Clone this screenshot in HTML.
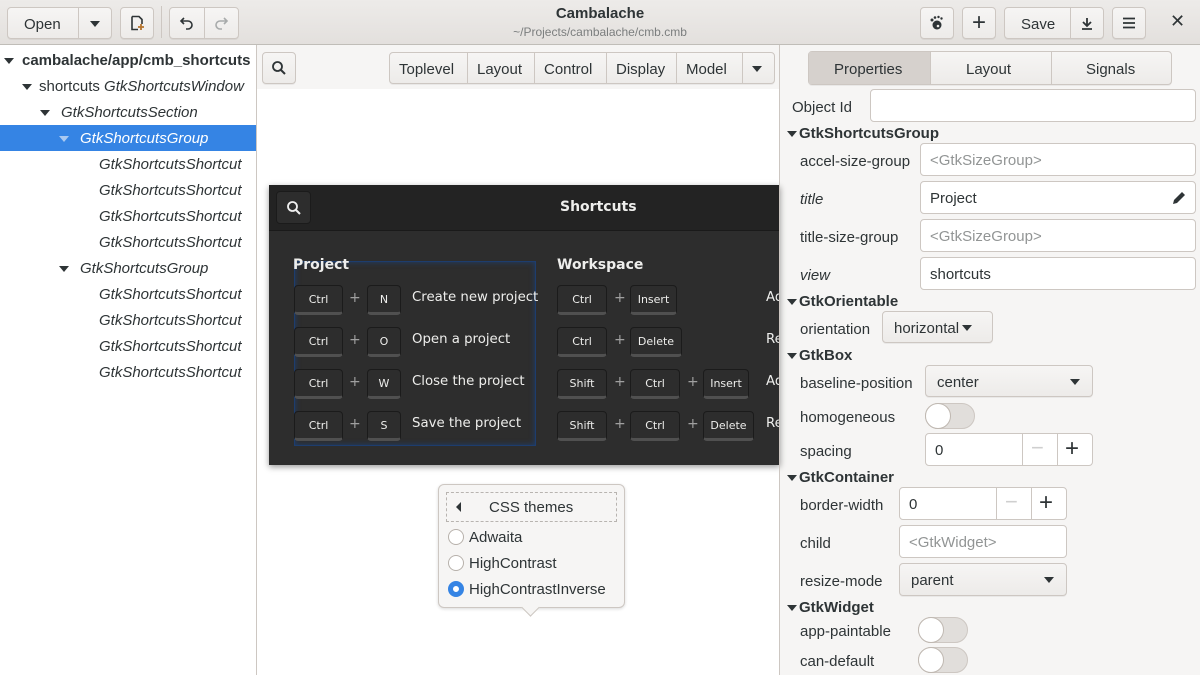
<!DOCTYPE html>
<html><head><meta charset="utf-8"><style>
*{box-sizing:border-box;margin:0;padding:0}
body{width:1200px;height:675px;overflow:hidden;background:#f6f5f4;font-family:"Liberation Sans","DejaVu Sans",sans-serif;font-size:15px;color:#2e3436;position:relative}
.a{position:absolute}
.btn{position:absolute;height:32px;border:1px solid #cdc7c2;border-radius:4px;background:linear-gradient(#f6f5f4,#edebe9);display:flex;align-items:center;justify-content:center;color:#2e3436;box-shadow:0 1px rgba(0,0,0,.05)}
.sep{position:absolute;top:0;bottom:0;width:1px;background:#cdc7c2}
.entry{position:absolute;height:33px;border:1px solid #cdc7c2;border-radius:4px;background:#fff;display:flex;align-items:center;padding-left:9px;padding-top:2px}
.ph{color:#929595}
.lbl{position:absolute;left:800px;margin-top:2px}
.hd{position:absolute;left:787px;font-weight:bold;margin-top:1px}
.tri{display:inline-block;width:0;height:0;border-left:5px solid transparent;border-right:5px solid transparent;border-top:6px solid #2e3436;vertical-align:middle}
.sw{position:absolute;width:50px;height:26px;border:1px solid #cdc7c2;border-radius:13px;background:#e1dedb}
.sw:after{content:"";position:absolute;left:-1px;top:-1px;width:26px;height:26px;border-radius:50%;background:#fff;border:1px solid #bfb8b1;box-sizing:border-box}
.tree{position:absolute;left:0;height:26px;width:256px;line-height:28px;white-space:nowrap;overflow:hidden}
.tree i{font-style:italic}
.dlg{position:absolute;left:269px;top:185px;width:511px;height:280px;background:#2d2d2d;color:#eeeeec;font-family:"DejaVu Sans",sans-serif;overflow:hidden;box-shadow:0 2px 6px rgba(0,0,0,.4)}
.key{position:absolute;height:30px;border:1px solid #1b1b1b;border-bottom:3px solid #505050;border-radius:4px;background:#2d2d2d;font-size:11px;display:flex;align-items:center;justify-content:center;color:#eeeeec;padding-top:1px}
.plus{position:absolute;font-size:14px;color:#a0a0a0}
.desc{position:absolute;font-size:13.3px;color:#eeeeec}
</style></head><body>
<!-- header -->
<div class="a" style="left:0;top:0;width:1200px;height:45px;background:linear-gradient(#edebe9,#e3e0dd);border-bottom:1px solid #c0bdb8"></div>
<div class="btn" style="left:7px;top:7px;width:105px;justify-content:flex-start"><span style="margin-left:16px;margin-top:2px">Open</span><div class="sep" style="left:70px"></div><span class="tri" style="position:absolute;left:82px;top:13px"></span></div>
<div class="btn" style="left:120px;top:7px;width:34px"><svg width="16" height="16" viewBox="0 0 16 16"><path d="M3 1.5h7l3 3V9M3 1.5v13h6" fill="none" stroke="#2e3436" stroke-width="1.6"/><path d="M12 9v6M9 12h6" stroke="#b5742f" stroke-width="1.8"/></svg></div>
<div class="a" style="left:161px;top:6px;width:1px;height:32px;background:#cdc7c2"></div>
<div class="btn" style="left:169px;top:7px;width:70px"><div class="sep" style="left:34px"></div>
<svg class="a" style="left:9px;top:7px" width="16" height="16" viewBox="0 0 16 16"><path d="M5 3L2 6l3 3M2 6h7a4 4 0 0 1 0 8H7" fill="none" stroke="#2e3436" stroke-width="1.6"/></svg>
<svg class="a" style="left:43px;top:7px" width="16" height="16" viewBox="0 0 16 16"><path d="M11 3l3 3-3 3M14 6H7a4 4 0 0 0 0 8h2" fill="none" stroke="#a8abab" stroke-width="1.6"/></svg></div>
<div class="a" style="left:0;width:1200px;top:5px;text-align:center;font-weight:bold;font-size:15px">Cambalache</div>
<div class="a" style="left:0;width:1200px;top:25px;text-align:center;font-size:12px;color:#7b7e7e">~/Projects/cambalache/cmb.cmb</div>
<div class="btn" style="left:920px;top:7px;width:34px"><svg width="16" height="16" viewBox="0 0 16 16"><circle cx="8" cy="10" r="4.5" fill="#2e3436"/><circle cx="3" cy="5" r="1.5" fill="#2e3436"/><circle cx="6" cy="2.5" r="1.3" fill="#2e3436"/><circle cx="9.5" cy="2" r="1.2" fill="#2e3436"/><circle cx="12.5" cy="3.5" r="1.2" fill="#2e3436"/><circle cx="9" cy="11" r="1.3" fill="#edebe9"/></svg></div>
<div class="btn" style="left:962px;top:7px;width:34px;font-size:24px;font-weight:300">+</div>
<div class="btn" style="left:1004px;top:7px;width:100px;justify-content:flex-start"><span style="margin-left:16px;margin-top:2px">Save</span><div class="sep" style="left:65px"></div>
<svg class="a" style="left:74px;top:7px" width="16" height="16" viewBox="0 0 16 16"><path d="M8 3v8M4 7l4 4 4-4M3 14h10" fill="none" stroke="#2e3436" stroke-width="1.8"/></svg></div>
<div class="btn" style="left:1112px;top:7px;width:34px"><svg width="16" height="16" viewBox="0 0 16 16"><path d="M2 3.5h12M2 8h12M2 12.5h12" stroke="#2e3436" stroke-width="1.8"/></svg></div>
<div class="a" style="left:1170px;top:11px;font-size:18px;font-weight:bold">✕</div>
<!-- left tree -->
<div class="a" style="left:0;top:45px;width:257px;height:630px;background:#fff;border-right:1px solid #cdc7c2"></div>
<div class="tree" style="top:47px;font-weight:bold"><span class="tri" style="margin:0 8px 0 4px"></span>cambalache/app/cmb_shortcuts</div>
<div class="tree" style="top:73px"><span class="tri" style="margin:0 7px 0 22px"></span>shortcuts <i>GtkShortcutsWindow</i></div>
<div class="tree" style="top:99px"><span class="tri" style="margin:0 11px 0 40px"></span><i>GtkShortcutsSection</i></div>
<div class="tree" style="top:125px;background:#3584e4;color:#fff"><span class="tri" style="margin:0 11px 0 59px;border-top-color:#a9c9f1"></span><i>GtkShortcutsGroup</i></div>
<div class="tree" style="top:151px;padding-left:99px"><i>GtkShortcutsShortcut</i></div>
<div class="tree" style="top:177px;padding-left:99px"><i>GtkShortcutsShortcut</i></div>
<div class="tree" style="top:203px;padding-left:99px"><i>GtkShortcutsShortcut</i></div>
<div class="tree" style="top:229px;padding-left:99px"><i>GtkShortcutsShortcut</i></div>
<div class="tree" style="top:255px"><span class="tri" style="margin:0 11px 0 59px"></span><i>GtkShortcutsGroup</i></div>
<div class="tree" style="top:281px;padding-left:99px"><i>GtkShortcutsShortcut</i></div>
<div class="tree" style="top:307px;padding-left:99px"><i>GtkShortcutsShortcut</i></div>
<div class="tree" style="top:333px;padding-left:99px"><i>GtkShortcutsShortcut</i></div>
<div class="tree" style="top:359px;padding-left:99px"><i>GtkShortcutsShortcut</i></div>
<!-- middle -->
<div class="a" style="left:257px;top:89px;width:522px;height:586px;background:#fff"></div>
<div class="btn" style="left:262px;top:52px;width:34px"><svg width="16" height="16" viewBox="0 0 16 16"><circle cx="6.5" cy="6.5" r="4.5" fill="none" stroke="#2e3436" stroke-width="1.8"/><path d="M10 10l4 4" stroke="#2e3436" stroke-width="2"/></svg></div>
<div class="btn" style="left:389px;top:52px;width:386px;justify-content:flex-start;font-size:15px">
<span class="a" style="left:9px;top:8px">Toplevel</span><div class="sep" style="left:77px"></div>
<span class="a" style="left:87px;top:8px">Layout</span><div class="sep" style="left:144px"></div>
<span class="a" style="left:154px;top:8px">Control</span><div class="sep" style="left:216px"></div>
<span class="a" style="left:226px;top:8px">Display</span><div class="sep" style="left:286px"></div>
<span class="a" style="left:296px;top:8px">Model</span><div class="sep" style="left:352px"></div>
<span class="tri a" style="left:362px;top:13px"></span></div>
<!-- shortcuts dialog -->
<div class="dlg">
<div class="a" style="left:0;top:0;width:511px;height:46px;background:#232323;border-bottom:1px solid #1a1a1a"></div>
<div class="a" style="left:7px;top:6px;width:35px;height:33px;border:1px solid #1b1b1b;border-radius:4px;background:#2d2d2d;display:flex;align-items:center;justify-content:center"><svg width="16" height="16" viewBox="0 0 16 16"><circle cx="6.5" cy="6.5" r="4.5" fill="none" stroke="#eee" stroke-width="1.8"/><path d="M10 10l4 4" stroke="#eee" stroke-width="2"/></svg></div>
<div class="a" style="left:291px;top:14px;font-weight:bold;font-size:14px">Shortcuts</div>
<div class="a" style="left:25px;top:76px;width:242px;height:185px;border:1px solid #1d3d6e;box-shadow:inset 0 0 6px #1e3f70"></div>
<div class="a" style="left:24px;top:72px;font-weight:bold;font-size:14px">Project</div>
<div class="a" style="left:288px;top:72px;font-weight:bold;font-size:14px">Workspace</div>
<div class="key" style="left:25px;top:100px;width:49px">Ctrl</div><div class="plus" style="left:80px;top:105px">+</div><div class="key" style="left:98px;top:100px;width:34px">N</div><div class="desc" style="left:143px;top:105px">Create new project</div>
<div class="key" style="left:25px;top:142px;width:49px">Ctrl</div><div class="plus" style="left:80px;top:147px">+</div><div class="key" style="left:98px;top:142px;width:34px">O</div><div class="desc" style="left:143px;top:147px">Open a project</div>
<div class="key" style="left:25px;top:184px;width:49px">Ctrl</div><div class="plus" style="left:80px;top:189px">+</div><div class="key" style="left:98px;top:184px;width:34px">W</div><div class="desc" style="left:143px;top:189px">Close the project</div>
<div class="key" style="left:25px;top:226px;width:49px">Ctrl</div><div class="plus" style="left:80px;top:231px">+</div><div class="key" style="left:98px;top:226px;width:34px">S</div><div class="desc" style="left:143px;top:231px">Save the project</div>
<div class="key" style="left:288px;top:100px;width:50px">Ctrl</div><div class="plus" style="left:345px;top:105px">+</div><div class="key" style="left:361px;top:100px;width:47px">Insert</div><div class="desc" style="left:497px;top:105px">Ad</div>
<div class="key" style="left:288px;top:142px;width:50px">Ctrl</div><div class="plus" style="left:345px;top:147px">+</div><div class="key" style="left:361px;top:142px;width:52px">Delete</div><div class="desc" style="left:497px;top:147px">Re</div>
<div class="key" style="left:288px;top:184px;width:50px">Shift</div><div class="plus" style="left:345px;top:189px">+</div><div class="key" style="left:361px;top:184px;width:50px">Ctrl</div><div class="plus" style="left:418px;top:189px">+</div><div class="key" style="left:434px;top:184px;width:46px">Insert</div><div class="desc" style="left:497px;top:189px">Ad</div>
<div class="key" style="left:288px;top:226px;width:50px">Shift</div><div class="plus" style="left:345px;top:231px">+</div><div class="key" style="left:361px;top:226px;width:50px">Ctrl</div><div class="plus" style="left:418px;top:231px">+</div><div class="key" style="left:434px;top:226px;width:51px">Delete</div><div class="desc" style="left:497px;top:231px">Re</div>
</div>
<!-- popover -->
<div class="a" style="left:438px;top:484px;width:187px;height:124px;background:#f6f5f4;border:1px solid #cdc7c2;border-radius:6px;box-shadow:0 1px 3px rgba(0,0,0,.15)"></div>
<div class="a" style="left:524px;top:601px;width:13px;height:13px;background:#f6f5f4;border-right:1px solid #cdc7c2;border-bottom:1px solid #cdc7c2;transform:rotate(45deg)"></div>
<div class="a" style="left:446px;top:492px;width:171px;height:30px;border:1px dashed #b8b4b0"></div>
<div class="a" style="left:456px;top:502px;width:0;height:0;border-top:5px solid transparent;border-bottom:5px solid transparent;border-right:5px solid #2e3436"></div>
<div class="a" style="left:489px;top:499px">CSS themes</div>
<div class="a" style="left:448px;top:529px;width:16px;height:16px;border:1px solid #b7b1ab;border-radius:50%;background:#fff"></div><div class="a" style="left:469px;top:529px">Adwaita</div>
<div class="a" style="left:448px;top:555px;width:16px;height:16px;border:1px solid #b7b1ab;border-radius:50%;background:#fff"></div><div class="a" style="left:469px;top:555px">HighContrast</div>
<div class="a" style="left:448px;top:581px;width:16px;height:16px;border-radius:50%;background:#fff;border:5px solid #3584e4"></div><div class="a" style="left:469px;top:581px">HighContrastInverse</div>
<!-- right panel -->
<div class="a" style="left:779px;top:45px;width:1px;height:630px;background:#cdc7c2"></div>
<div class="btn" style="left:808px;top:51px;width:364px;height:34px">
<div class="a" style="left:0;top:0;width:121px;height:32px;background:#d6d1cd"></div>
<span class="a" style="left:25px;top:9px">Properties</span><div class="sep" style="left:121px"></div>
<span class="a" style="left:157px;top:9px">Layout</span><div class="sep" style="left:242px"></div>
<span class="a" style="left:277px;top:9px">Signals</span></div>
<div class="lbl" style="left:792px;top:97px">Object Id</div><div class="entry" style="left:870px;top:89px;width:326px"></div>
<div class="hd" style="top:124px"><span class="tri" style="margin-right:2px"></span>GtkShortcutsGroup</div>
<div class="lbl" style="top:151px">accel-size-group</div><div class="entry ph" style="left:920px;top:143px;width:276px">&lt;GtkSizeGroup&gt;</div>
<div class="lbl" style="top:189px;font-style:italic">title</div><div class="entry" style="left:920px;top:181px;width:276px">Project<svg class="a" style="right:8px;top:8px" width="16" height="16" viewBox="0 0 16 16"><path d="M2 14l1-4 8-8 3 3-8 8z" fill="#2e3436"/></svg></div>
<div class="lbl" style="top:227px">title-size-group</div><div class="entry ph" style="left:920px;top:219px;width:276px">&lt;GtkSizeGroup&gt;</div>
<div class="lbl" style="top:265px;font-style:italic">view</div><div class="entry" style="left:920px;top:257px;width:276px">shortcuts</div>
<div class="hd" style="top:292px"><span class="tri" style="margin-right:2px"></span>GtkOrientable</div>
<div class="lbl" style="top:319px">orientation</div><div class="btn" style="left:882px;top:311px;width:111px;justify-content:flex-start;padding-left:11px;padding-top:2px">horizontal<span class="tri" style="margin-left:3px"></span></div>
<div class="hd" style="top:346px"><span class="tri" style="margin-right:2px"></span>GtkBox</div>
<div class="lbl" style="top:373px">baseline-position</div><div class="btn" style="left:925px;top:365px;width:168px;justify-content:flex-start;padding-left:11px;padding-top:2px">center<span class="tri a" style="right:12px;top:13px"></span></div>
<div class="lbl" style="top:407px">homogeneous</div><div class="sw" style="left:925px;top:403px"></div>
<div class="lbl" style="top:441px">spacing</div><div class="entry" style="left:925px;top:433px;width:168px">0<div class="sep" style="left:96px"></div><div class="sep" style="left:131px"></div><span class="a" style="left:105px;top:1px;font-size:22px;color:#cfcfcf">−</span><span class="a" style="left:139px;top:1px;font-size:24px">+</span></div>
<div class="hd" style="top:468px"><span class="tri" style="margin-right:2px"></span>GtkContainer</div>
<div class="lbl" style="top:495px">border-width</div><div class="entry" style="left:899px;top:487px;width:168px">0<div class="sep" style="left:96px"></div><div class="sep" style="left:131px"></div><span class="a" style="left:105px;top:1px;font-size:22px;color:#cfcfcf">−</span><span class="a" style="left:139px;top:1px;font-size:24px">+</span></div>
<div class="lbl" style="top:533px">child</div><div class="entry ph" style="left:899px;top:525px;width:168px">&lt;GtkWidget&gt;</div>
<div class="lbl" style="top:571px">resize-mode</div><div class="btn" style="left:899px;top:563px;width:168px;height:33px;justify-content:flex-start;padding-left:11px;padding-top:2px">parent<span class="tri a" style="right:12px;top:13px"></span></div>
<div class="hd" style="top:598px"><span class="tri" style="margin-right:2px"></span>GtkWidget</div>
<div class="lbl" style="top:621px">app-paintable</div><div class="sw" style="left:918px;top:617px"></div>
<div class="lbl" style="top:651px">can-default</div><div class="sw" style="left:918px;top:647px"></div>
</body></html>
